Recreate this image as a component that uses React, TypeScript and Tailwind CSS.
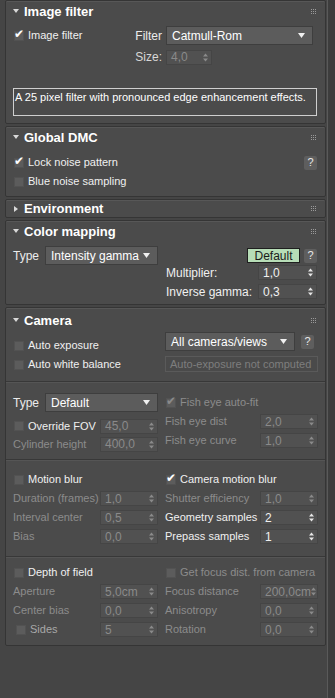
import React from "react";

const FONT = "font-['Liberation_Sans',Arial,sans-serif]";

function Grip() {
  return (
    <div className="grid grid-cols-3 gap-[1px]">
      {Array.from({ length: 9 }).map((_, i) => (
        <div key={i} className="w-[1px] h-[1px] bg-[#9a9a9a]" />
      ))}
    </div>
  );
}

function Header({ title, open = true, h = "h-[21px]" }: { title: string; open?: boolean; h?: string }) {
  return (
    <div className={`flex items-center ${h} pl-[7px] pr-[9px]`}>
      {open ? (
        <svg width="6" height="5" viewBox="0 0 6 5" className="mr-[5px]">
          <path d="M0 0 L6 0 L3 4 Z" fill="#d8d8d8" />
        </svg>
      ) : (
        <svg width="6" height="6" viewBox="0 0 6 6" className="mr-[5px]">
          <path d="M1 0 L5 3 L1 6 Z" fill="#d8d8d8" />
        </svg>
      )}
      <span className="text-[13px] font-bold text-white leading-none">{title}</span>
      <div className="ml-auto">
        <Grip />
      </div>
    </div>
  );
}

function Panel({
  title,
  open = true,
  h,
  children,
}: {
  title: string;
  open?: boolean;
  h?: string;
  children?: React.ReactNode;
}) {
  return (
    <div className="border border-[#353535] bg-[#4b4b4b] rounded-[2px] shadow-[inset_0_1px_0_#575757]">
      <Header title={title} open={open} h={h} />
      {children}
    </div>
  );
}

function Box({ checked, disabled }: { checked?: boolean; disabled?: boolean }) {
  return (
    <div className="relative w-[10px] h-[10px] bg-[#5c5c5c] border border-[#525252] shrink-0">
      {checked && (
        <span
          className={`absolute left-[-1px] top-[-4px] text-[12px] leading-none ${
            disabled ? "text-[#8a8a8a]" : "text-white"
          }`}
        >
          ✔
        </span>
      )}
    </div>
  );
}

function Check({
  label,
  checked,
  disabled,
  className = "",
  labelColor,
}: {
  label: string;
  checked?: boolean;
  disabled?: boolean;
  className?: string;
  labelColor?: string;
}) {
  return (
    <div className={`flex items-center gap-[4px] pl-[1px] ${className}`}>
      <Box checked={checked} disabled={disabled} />
      <span className={labelColor ?? (disabled ? "text-[#8c8c8c]" : "text-[#f0f0f0]")}>{label}</span>
    </div>
  );
}

function Arrows({ disabled }: { disabled?: boolean }) {
  const c = disabled ? "#8a8a8a" : "#e6e6e6";
  return (
    <svg width="5" height="9" viewBox="0 0 5 9">
      <path d="M0 3.5 L2.5 0.5 L5 3.5 Z" fill={c} />
      <path d="M0 5.5 L2.5 8.5 L5 5.5 Z" fill={c} />
    </svg>
  );
}

function Spinner({
  value,
  disabled,
  className = "w-[58px]",
}: {
  value: string;
  disabled?: boolean;
  className?: string;
}) {
  return (
    <div
      className={`h-[15px] flex items-center pl-[4px] pr-[3px] bg-[#515151] border border-[#454545] text-[12px] ${className} ${
        disabled ? "text-[#8a8a8a]" : "text-[#f0f0f0]"
      }`}
    >
      <span className="leading-none">{value}</span>
      <div className="ml-auto">
        <Arrows disabled={disabled} />
      </div>
    </div>
  );
}

function Dropdown({ value, className = "" }: { value: string; className?: string }) {
  return (
    <div
      className={`h-[19px] flex items-center pl-[5px] pr-[7px] bg-[#5c5c5c] border border-[#3e3e3e] text-white text-[12px] ${className}`}
    >
      <span className="leading-none">{value}</span>
      <svg width="7" height="5" viewBox="0 0 7 5" className="ml-auto">
        <path d="M0 0 L7 0 L3.5 5 Z" fill="#f0f0f0" />
      </svg>
    </div>
  );
}

function Help({ className = "" }: { className?: string }) {
  return (
    <div
      className={`w-[13px] h-[14px] bg-[#5e5e5e] rounded-[2px] flex items-center justify-center text-[11px] text-[#e8e8e8] leading-none ${className}`}
    >
      ?
    </div>
  );
}

function LRow({
  label,
  value,
  disabled,
  vDisabled,
  h = "h-[19px]",
}: {
  label: string;
  value: string;
  disabled?: boolean;
  vDisabled?: boolean;
  h?: string;
}) {
  return (
    <div className={`flex items-center ${h}`}>
      <span className={`flex-1 whitespace-nowrap ${disabled ? "text-[#8c8c8c]" : "text-[#f0f0f0]"}`}>{label}</span>
      <Spinner value={value} disabled={vDisabled ?? disabled} />
    </div>
  );
}

function Divider() {
  return <div className="h-[2px] border-t border-[#383838] border-b border-b-[#555555]" />;
}

export default function App() {
  return (
    <div className={`w-[335px] h-[698px] bg-[#454545] flex text-[11px] ${FONT}`}>
      <div className="w-[327px] pl-[5px] pr-[1px] flex flex-col gap-[2px]">
        {/* Image filter */}
        <Panel title="Image filter">
          <div className="pl-[7px] pr-[8px] pb-[7px]">
            <div className="flex items-center h-[19px] mt-[4px]">
              <Check label="Image filter" checked className="flex-1" />
              <span className="text-[#ececec] text-[12px] mr-[4px]">Filter</span>
              <Dropdown value="Catmull-Rom" className="w-[147px] mr-[4px]" />
            </div>
            <div className="flex items-center h-[14px] mt-[5px]">
              <span className="flex-1 text-right text-[#d8d8d8] text-[12px] mr-[4px]">Size:</span>
              <Spinner value="4,0" disabled className="w-[46px] mr-[105px]" />
            </div>
            <div className="mt-[24px] h-[28px] border border-[#cfcfcf] px-[1px] pt-[1px] text-white leading-[14px]">
              A 25 pixel filter with pronounced edge enhancement effects.
            </div>
          </div>
        </Panel>

        {/* Global DMC */}
        <Panel title="Global DMC">
          <div className="pl-[7px] pr-[8px] pt-[5px] pb-[5px]">
            <div className="flex items-center h-[19px]">
              <Check label="Lock noise pattern" checked className="flex-1" />
              <Help />
            </div>
            <div className="flex items-center h-[19px]">
              <Check label="Blue noise sampling" />
            </div>
          </div>
        </Panel>

        {/* Environment */}
        <Panel title="Environment" open={false} h="h-[17px]" />

        {/* Color mapping */}
        <Panel title="Color mapping">
          <div className="pl-[7px] pr-[8px] pt-[4px] pb-[3px]">
            <div className="flex items-center h-[19px]">
              <span className="w-[32px] text-[#ececec] text-[12px]">Type</span>
              <Dropdown value="Intensity gamma" className="w-[113px]" />
              <div className="ml-auto w-[53px] h-[15px] bg-[#b7ddb7] border border-[#1f1f1f] text-[#1a1a1a] flex items-center justify-center text-[12px]">
                Default
              </div>
              <Help className="ml-[4px]" />
            </div>
            <div className="pl-[153px] mt-[-2px]">
              <div className="flex items-center h-[19px]">
                <span className="flex-1 text-[#f0f0f0] text-[12px]">Multiplier:</span>
                <Spinner value="1,0" className="w-[59px]" />
              </div>
              <div className="flex items-center h-[19px]">
                <span className="flex-1 text-[#f0f0f0] text-[12px]">Inverse gamma:</span>
                <Spinner value="0,3" className="w-[59px]" />
              </div>
            </div>
          </div>
        </Panel>

        {/* Camera */}
        <Panel title="Camera" h="h-[24px]">
          <div className="grid grid-cols-[145px_153px] gap-x-[7px] pl-[7px] pr-[8px] pt-[0px] pb-[7px]">
            <div className="pt-[4px]">
              <div className="flex items-center h-[19px]">
                <Check label="Auto exposure" />
              </div>
              <div className="flex items-center h-[19px]">
                <Check label="Auto white balance" />
              </div>
            </div>
            <div>
              <div className="flex items-center">
                <Dropdown value="All cameras/views" className="w-[130px]" />
                <Help className="ml-[6px]" />
              </div>
              <div className="mt-[5px] h-[16px] border border-[#5a5a5a] bg-[#4a4a4a] flex items-center pl-[4px] text-[#7e7e7e] whitespace-nowrap overflow-hidden">
                Auto-exposure not computed
              </div>
            </div>
          </div>
          <Divider />
          <div className="grid grid-cols-[145px_153px] gap-x-[7px] pl-[7px] pr-[8px] pt-[10px] pb-[6px]">
            <div>
              <div className="flex items-center h-[19px]">
                <span className="w-[32px] text-[#ececec] text-[12px]">Type</span>
                <Dropdown value="Default" className="w-[113px]" />
              </div>
              <div className="flex items-center h-[18px] mt-[5px]">
                <Check label="Override FOV" className="flex-1" />
                <Spinner value="45,0" disabled />
              </div>
              <LRow label="Cylinder height" value="400,0" disabled h="h-[18px]" />
            </div>
            <div>
              <div className="flex items-center h-[19px]">
                <Check label="Fish eye auto-fit" checked disabled />
              </div>
              <LRow label="Fish eye dist" value="2,0" disabled />
              <LRow label="Fish eye curve" value="1,0" disabled />
            </div>
          </div>
          <Divider />
          <div className="grid grid-cols-[145px_153px] gap-x-[7px] pl-[7px] pr-[8px] pt-[9px] pb-[10px]">
            <div>
              <div className="flex items-center h-[19px]">
                <Check label="Motion blur" />
              </div>
              <LRow label="Duration (frames)" value="1,0" disabled />
              <LRow label="Interval center" value="0,5" disabled />
              <LRow label="Bias" value="0,0" disabled />
            </div>
            <div>
              <div className="flex items-center h-[19px]">
                <Check label="Camera motion blur" checked />
              </div>
              <LRow label="Shutter efficiency" value="1,0" disabled />
              <LRow label="Geometry samples" value="2" />
              <LRow label="Prepass samples" value="1" />
            </div>
          </div>
          <Divider />
          <div className="grid grid-cols-[145px_153px] gap-x-[7px] pl-[7px] pr-[8px] pt-[5px] pb-[6px]">
            <div>
              <div className="flex items-center h-[19px]">
                <Check label="Depth of field" />
              </div>
              <LRow label="Aperture" value="5,0cm" disabled />
              <LRow label="Center bias" value="0,0" disabled />
              <div className="flex items-center h-[19px]">
                <Check label="Sides" className="flex-1 pl-[3px]" labelColor="text-[#a8a8a8]" />
                <Spinner value="5" disabled />
              </div>
            </div>
            <div>
              <div className="flex items-center h-[19px]">
                <Check label="Get focus dist. from camera" disabled />
              </div>
              <LRow label="Focus distance" value="200,0cm" disabled />
              <LRow label="Anisotropy" value="0,0" disabled />
              <LRow label="Rotation" value="0,0" disabled />
            </div>
          </div>
        </Panel>
      </div>
      <div className="flex-1 bg-[#3d3d3d] border-l border-[#5a5a5a]" />
    </div>
  );
}
